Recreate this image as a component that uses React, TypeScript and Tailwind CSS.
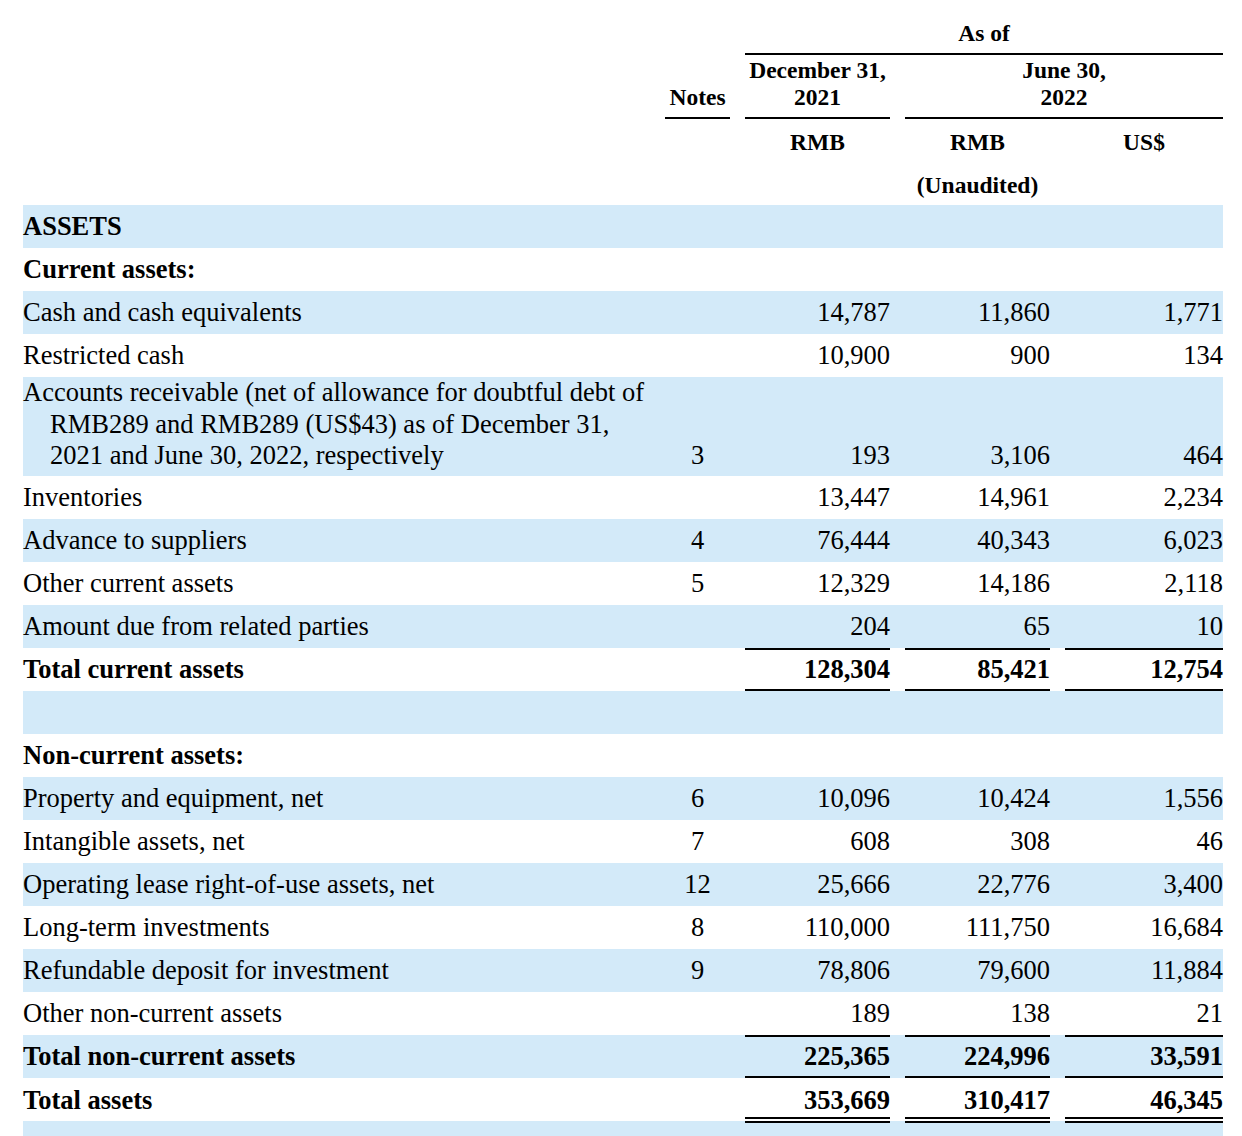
import React from "react";

type Row = {
  label?: string[];
  note?: string;
  values?: [string, string, string];
  bold?: boolean;
  total?: "single" | "double";
};

const COLS = "grid grid-cols-[1fr_65px_145px_145px_158px] gap-x-[15px]";

const ROWS: Row[] = [
  { label: ["ASSETS"], bold: true },
  { label: ["Current assets:"], bold: true },
  { label: ["Cash and cash equivalents"], values: ["14,787", "11,860", "1,771"] },
  { label: ["Restricted cash"], values: ["10,900", "900", "134"] },
  {
    label: [
      "Accounts receivable (net of allowance for doubtful debt of",
      "RMB289 and RMB289 (US$43) as of December 31,",
      "2021 and June 30, 2022, respectively",
    ],
    note: "3",
    values: ["193", "3,106", "464"],
  },
  { label: ["Inventories"], values: ["13,447", "14,961", "2,234"] },
  { label: ["Advance to suppliers"], note: "4", values: ["76,444", "40,343", "6,023"] },
  { label: ["Other current assets"], note: "5", values: ["12,329", "14,186", "2,118"] },
  { label: ["Amount due from related parties"], values: ["204", "65", "10"] },
  { label: ["Total current assets"], bold: true, total: "single", values: ["128,304", "85,421", "12,754"] },
  {},
  { label: ["Non-current assets:"], bold: true },
  { label: ["Property and equipment, net"], note: "6", values: ["10,096", "10,424", "1,556"] },
  { label: ["Intangible assets, net"], note: "7", values: ["608", "308", "46"] },
  { label: ["Operating lease right-of-use assets, net"], note: "12", values: ["25,666", "22,776", "3,400"] },
  { label: ["Long-term investments"], note: "8", values: ["110,000", "111,750", "16,684"] },
  { label: ["Refundable deposit for investment"], note: "9", values: ["78,806", "79,600", "11,884"] },
  { label: ["Other non-current assets"], values: ["189", "138", "21"] },
  { label: ["Total non-current assets"], bold: true, total: "single", values: ["225,365", "224,996", "33,591"] },
  { label: ["Total assets"], bold: true, total: "double", values: ["353,669", "310,417", "46,345"] },
  {},
];

function BodyRow({ row, shaded }: { row: Row; shaded: boolean }) {
  const multi = (row.label?.length ?? 0) > 1;
  const valueBorder =
    row.total === "single"
      ? "border-t-2 border-b-2 border-black"
      : row.total === "double"
        ? "border-b-[6px] border-double border-black pt-[7px]"
        : "";
  return (
    <div
      className={`${COLS} ${shaded ? "bg-[#d3eaf9]" : ""} ${multi ? "pb-[4.5px]" : "h-[43px]"} ${
        row.bold ? "font-bold" : ""
      }`}
    >
      <div className="flex flex-col justify-center whitespace-nowrap">
        {row.label?.map((line, i) => (
          <div key={i} className={i > 0 ? "pl-[27px]" : ""}>
            {line}
          </div>
        ))}
      </div>
      <div className={`flex justify-center ${multi ? "items-end" : "items-center"}`}>{row.note}</div>
      {[0, 1, 2].map((i) => (
        <div
          key={i}
          className={`flex justify-end ${multi ? "items-end" : "items-center"} ${row.values ? valueBorder : ""}`}
        >
          {row.values?.[i]}
        </div>
      ))}
    </div>
  );
}

export default function App() {
  return (
    <div className="min-h-screen bg-white font-['Liberation_Serif',serif] text-black">
      <div className="ml-[23px] w-[1200px]">
        <div className={`${COLS} text-center text-[23.5px] font-bold leading-[27px]`}>
          <div className="col-span-3 col-start-3 border-b-2 border-black pt-[20px] pb-[6px]">As of</div>
          <div className="col-start-2 self-end border-b-2 border-black pb-[6px]">Notes</div>
          <div className="border-b-2 border-black pt-[2px] pb-[6px]">
            December 31,
            <br />
            2021
          </div>
          <div className="col-span-2 border-b-2 border-black pt-[2px] pb-[6px]">
            June 30,
            <br />
            2022
          </div>
          <div className="col-start-3 pt-[10px]">RMB</div>
          <div className="pt-[10px]">RMB</div>
          <div className="pt-[10px]">US$</div>
          <div className="col-start-4 pt-[16px] pb-[6px]">(Unaudited)</div>
        </div>
        <div className="text-[26.5px] leading-[31.5px]">
          {ROWS.map((row, i) => (
            <BodyRow key={i} row={row} shaded={i % 2 === 0} />
          ))}
        </div>
      </div>
    </div>
  );
}
